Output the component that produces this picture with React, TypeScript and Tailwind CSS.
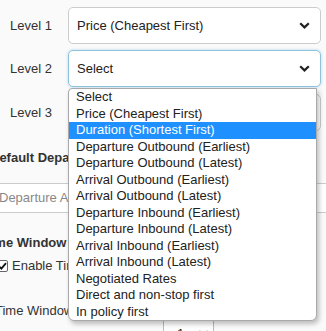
import { useState } from 'react'

const options = [
  'Select',
  'Price (Cheapest First)',
  'Duration (Shortest First)',
  'Departure Outbound (Earliest)',
  'Departure Outbound (Latest)',
  'Arrival Outbound (Earliest)',
  'Arrival Outbound (Latest)',
  'Departure Inbound (Earliest)',
  'Departure Inbound (Latest)',
  'Arrival Inbound (Earliest)',
  'Arrival Inbound (Latest)',
  'Negotiated Rates',
  'Direct and non-stop first',
  'In policy first',
]

function Chevron() {
  return (
    <svg width="11" height="7" viewBox="0 0 11 7" className="shrink-0">
      <path d="M1.2 1.2 L5.5 5.4 L9.8 1.2" fill="none" stroke="#222" strokeWidth="2.2" />
    </svg>
  )
}

export default function App() {
  const [hovered, setHovered] = useState(2)

  return (
    <div className="relative h-[331px] w-[326px] overflow-hidden bg-[#fafafa] font-['Liberation_Sans',Arial,sans-serif] text-[13px] text-[#333]">
      <div className="pt-[7px]">
        <div className="flex items-center">
          <div className="w-[68px] pl-[10px]">Level 1</div>
          <div className="flex h-[37px] w-[253px] items-center justify-between rounded-[5px] border border-[#ccc] bg-white pr-[10px] pl-[8px] text-[#222]">
            <span>Price (Cheapest First)</span>
            <Chevron />
          </div>
        </div>
        <div className="mt-[6px] flex items-center">
          <div className="w-[68px] pl-[10px]">Level 2</div>
          <div className="flex h-[37px] w-[253px] items-center justify-between rounded-[5px] border border-[#8fc3dc] bg-white pr-[10px] pl-[8px] text-[#222] shadow-[0_0_3px_rgba(102,175,233,0.5)]">
            <span>Select</span>
            <Chevron />
          </div>
        </div>
        <div className="mt-[7px] flex h-[37px] items-center">
          <div className="w-[68px] pl-[10px]">Level 3</div>
          <div className="h-[37px] w-[253px] rounded-[5px] border border-[#ccc] bg-white" />
        </div>

        <div className="mt-[17px] -ml-[10px] h-[20px] leading-[20px] font-bold whitespace-nowrap">
          Default Departure Airport
        </div>
        <div className="mt-[15px] -ml-[2px] flex h-[30px] w-[330px] items-center border-y border-[#ccc] bg-white text-[#888]">
          <span className="ml-[1px] whitespace-nowrap">Departure Airport</span>
        </div>

        <div className="mt-[20px] -ml-[17px] h-[20px] leading-[20px] font-bold whitespace-nowrap">
          Time Window
        </div>
        <div className="mt-[3px] -ml-[4px] flex h-[20px] items-center gap-[4px] whitespace-nowrap">
          <span className="flex h-[12px] w-[12px] items-center justify-center rounded-[2px] border border-[#666] bg-white">
            <svg width="9" height="8" viewBox="0 0 9 8">
              <path d="M1 4.2 L3.4 6.6 L8 1.2" fill="none" stroke="#111" strokeWidth="1.8" />
            </svg>
          </span>
          <span>Enable Time Window</span>
        </div>

        <div className="mt-[25px] flex items-start">
          <div className="-ml-[5px] h-[20px] w-[73px] leading-[20px] whitespace-nowrap">Time Window</div>
          <div className="mt-[17px] ml-[95px] flex h-[30px] w-[51px] items-center justify-between border-x border-t border-[#bbb] bg-white pr-[4px] pl-[13px] text-[#222]">
            <span>1</span>
            <Chevron />
          </div>
        </div>
      </div>

      <ul className="absolute top-[88px] left-[68px] w-[249px] rounded-b-[6px] rounded-tl-[4px] border border-[#a9a9a9] bg-white py-0 text-[#222] shadow-[2px_3px_5px_rgba(0,0,0,0.25)]">
        {options.map((o, i) => (
          <li
            key={o}
            onMouseEnter={() => setHovered(i)}
            className={
              i === hovered
                ? 'h-[16.5px] bg-[#1e90ff] pl-[7px] leading-[16.5px] text-white'
                : 'h-[16.5px] pl-[7px] leading-[16.5px]'
            }
          >
            {o}
          </li>
        ))}
      </ul>
    </div>
  )
}
